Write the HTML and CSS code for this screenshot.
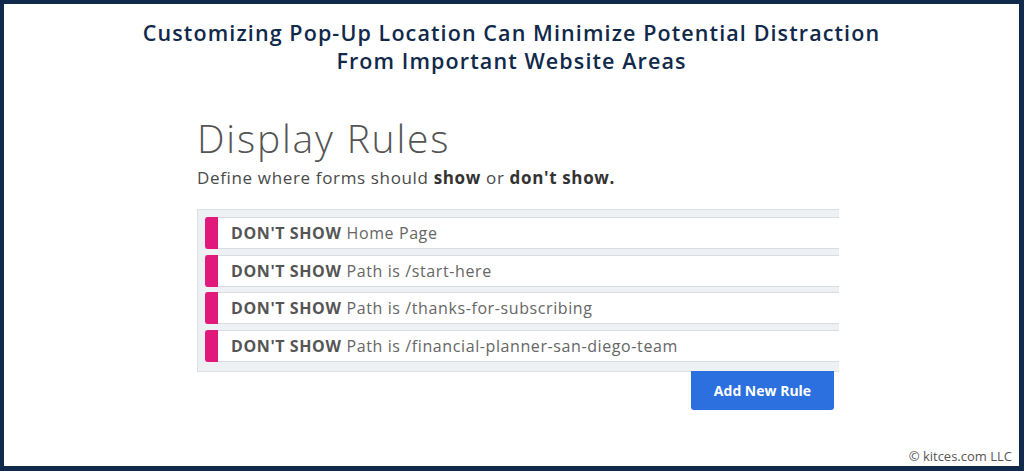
FILE: index.html
```html
<!DOCTYPE html>
<html lang="en">
<head>
    <meta charset="UTF-8">
    <title>Display Rules</title>
    <link rel="stylesheet" href="styles.css">
</head>
<body>
    <div class="frame">
        <h1 class="title">Customizing Pop-Up Location Can Minimize Potential Distraction<br>From Important Website Areas</h1>

        <div class="panel">
            <h2 class="panel-heading">Display Rules</h2>
            <p class="panel-sub">Define where forms should <b>show</b> or <b>don't show.</b></p>

            <div class="rules">
                <div class="rule"><span class="rule-mark"></span><span class="rule-text"><b>DON'T SHOW</b> Home Page</span></div>
                <div class="rule"><span class="rule-mark"></span><span class="rule-text"><b>DON'T SHOW</b> Path is /start-here</span></div>
                <div class="rule"><span class="rule-mark"></span><span class="rule-text"><b>DON'T SHOW</b> Path is /thanks-for-subscribing</span></div>
                <div class="rule"><span class="rule-mark"></span><span class="rule-text"><b>DON'T SHOW</b> Path is /financial-planner-san-diego-team</span></div>
            </div>

            <div class="actions">
                <button class="add-btn">Add New Rule</button>
            </div>
        </div>

        <div class="credit">© kitces.com LLC</div>
    </div>
</body>
</html>
```

FILE: styles.css
```css
html, body {
    margin: 0;
    padding: 0;
    background: #ffffff;
}
.frame {
    box-sizing: border-box;
    width: 1024px;
    height: 471px;
    border: 4px solid #11294a;
    border-right-width: 5px;
    border-bottom-width: 5px;
    display: flex;
    flex-direction: column;
}
.title {
    margin: 15px 0 0;
    text-align: center;
    font-family: "Open Sans", sans-serif;
    font-weight: 600;
    font-size: 21.5px;
    line-height: 28px;
    letter-spacing: 1.1px;
    color: #11294a;
}
.panel {
    width: 642px;
    margin: 40px 0 0 193px;
    font-family: "Open Sans", sans-serif;
}
.panel-heading {
    margin: 0;
    font-weight: 300;
    font-size: 39px;
    line-height: 46px;
    letter-spacing: 1.8px;
    color: #555555;
}
.panel-sub {
    margin: 6px 0 0;
    font-size: 17px;
    line-height: 22px;
    letter-spacing: 0.65px;
    color: #4a4a4a;
}
.panel-sub b {
    color: #333333;
}
.rules {
    margin-top: 20px;
    background: #eef1f4;
    border: 1px solid #dcdfe3;
    border-right: none;
    padding: 7px 0 9px 7px;
    display: flex;
    flex-direction: column;
    gap: 5.67px;
}
.rule {
    display: flex;
    align-items: stretch;
    height: 30px;
    background: #ffffff;
    border-top: 1px solid #d9dce0;
    border-bottom: 1px solid #d9dce0;
}
.rule-mark {
    width: 13px;
    margin-top: -1px;
    margin-bottom: -1px;
    background: #e0197a;
    border-radius: 3px 0 0 3px;
}
.rule-text {
    display: flex;
    align-items: center;
    padding-left: 13px;
    font-size: 16px;
    letter-spacing: 0.6px;
    color: #666666;
    white-space: nowrap;
}
.rule-text b {
    color: #555555;
    margin-right: 5px;
}
.actions {
    display: flex;
    justify-content: flex-end;
    padding-right: 5px;
}
.add-btn {
    margin-top: -1px;
    width: 143px;
    height: 39px;
    border: none;
    border-radius: 0 0 3px 3px;
    background: #2b70de;
    color: #ffffff;
    font-family: "Open Sans", sans-serif;
    font-weight: 700;
    font-size: 14px;
    cursor: pointer;
}
.credit {
    margin-top: auto;
    align-self: flex-end;
    padding: 0 7px 1px 0;
    font-family: "Open Sans", sans-serif;
    font-size: 13px;
    color: #555555;
}
```
